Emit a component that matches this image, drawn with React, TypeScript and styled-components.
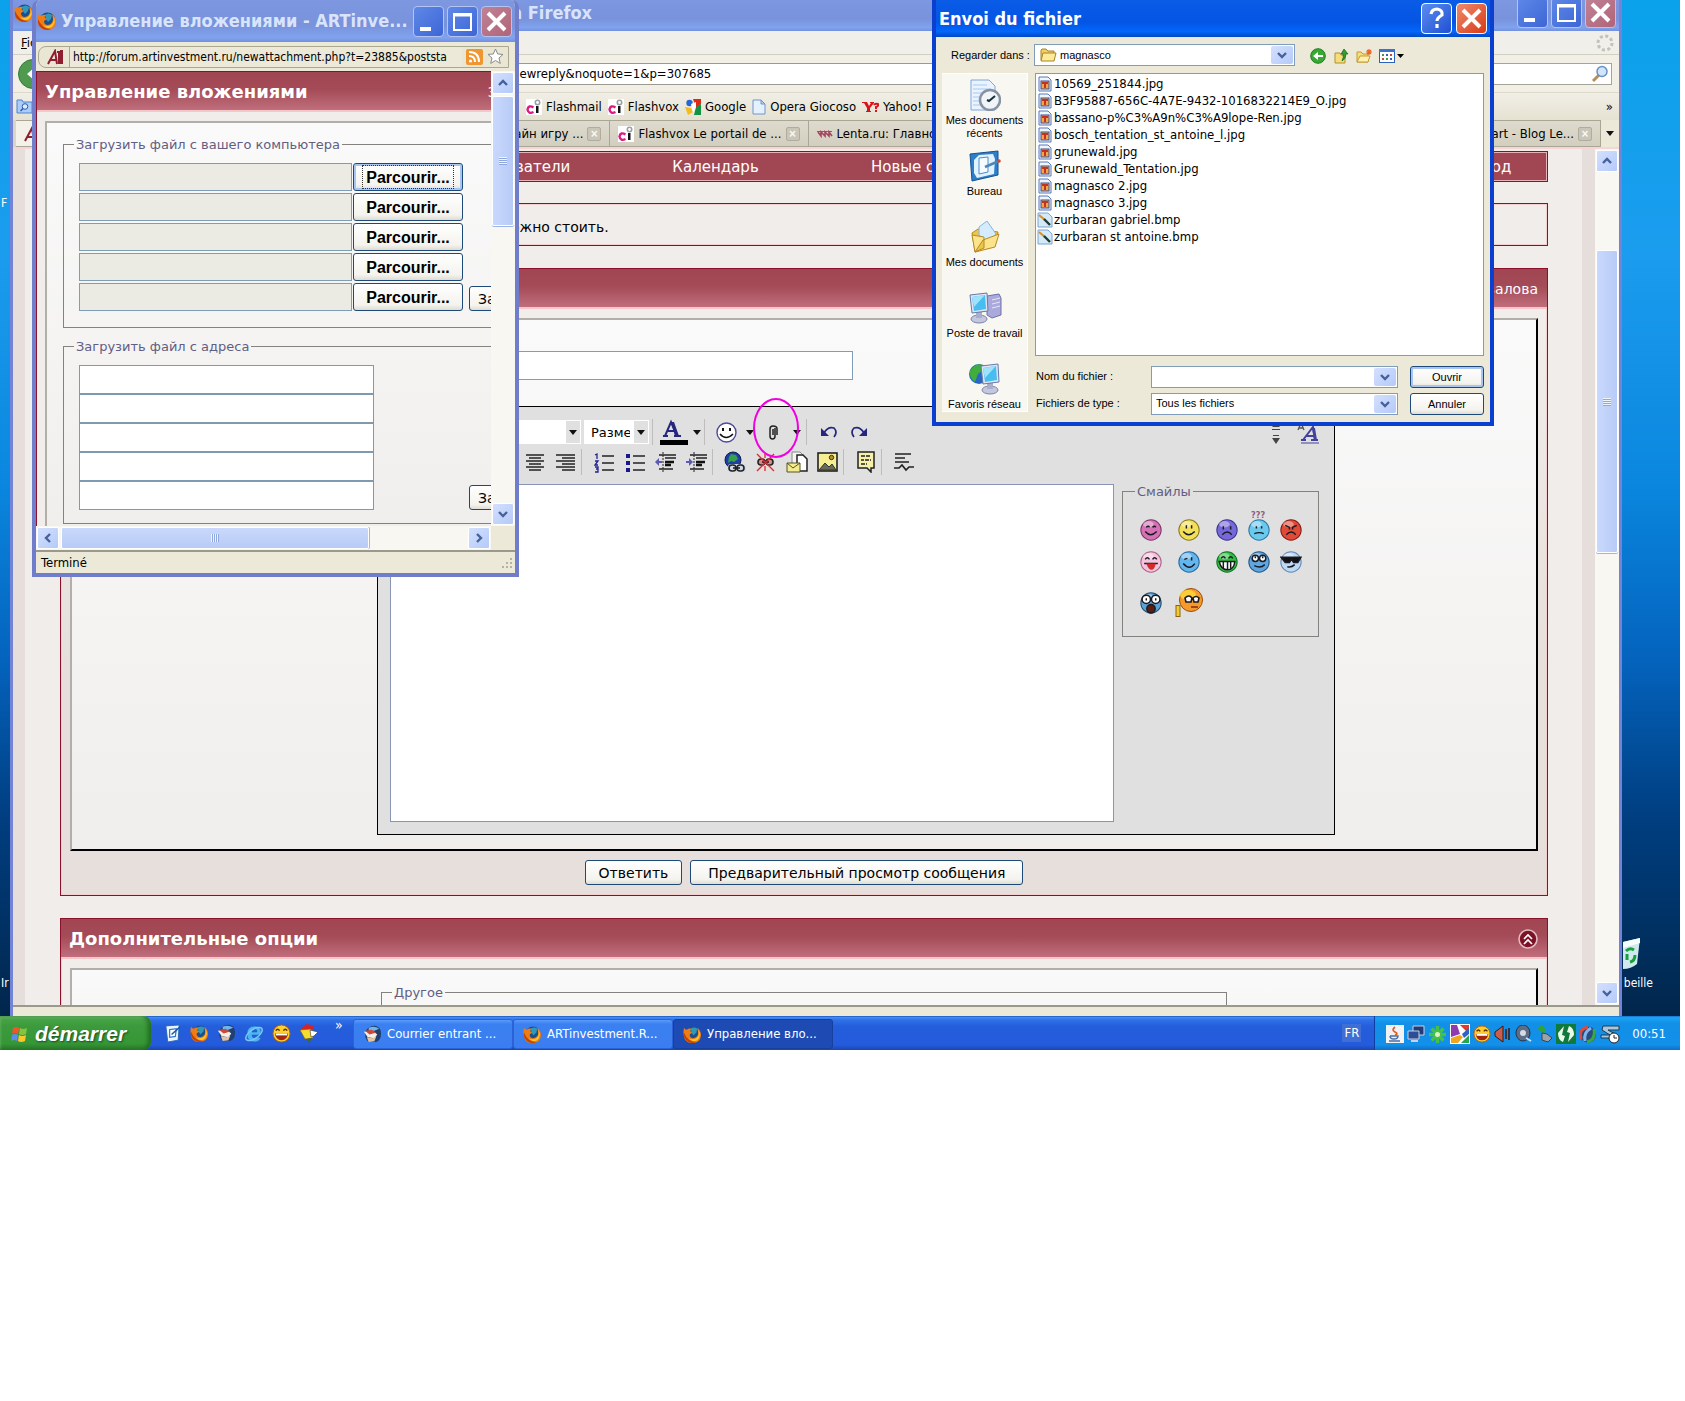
import React from 'react';
import styled, { createGlobalStyle, css } from 'styled-components';

const tahoma = '"DejaVu Sans Condensed", "DejaVu Sans", sans-serif';
const verdana = '"DejaVu Sans", sans-serif';
const arial = '"Liberation Sans", Arial, sans-serif';

const Global = createGlobalStyle`
  *, *::before, *::after { box-sizing: border-box; }
  body { margin: 0; background: #fff; font-family: ${tahoma}; font-size: 13px; color: #000; }
  button, input, select, textarea { font: inherit; color: inherit; margin: 0; }
  svg { display: block; flex: none; }
`;

/* ---------- icons ---------- */

type IconProps = { size?: number };

const Firefox = ({ size = 19 }: IconProps) => (
  <svg width={size} height={size} viewBox="0 0 20 20">
    <circle cx="10.500" cy="9.500" r="8" fill="#1c4f8f" />
    <path d="M8 4q4-3 7 0l-1 4-3 3-2-3z" fill="#2f9ab8" />
    <path d="M1 3q1 2 3 2 2-2 5-1-2 2-1 3l2 1-3 2q0 4 4 4 5-1 5-6l-1-5q4 3 4 8-1 8-9 8T1 12q-1-5 0-9z" fill="#ef7d13" />
    <path d="M16 5q2 6-2 9-4 2-8 0 4 5 9 2 5-5 1-11z" fill="#ffc62b" />
    <path d="M1 8q-1 7 5 10 4 2 8 0-9 0-13-10z" fill="#c2410c" />
  </svg>
);
const Thunderbird = ({ size = 19 }: IconProps) => (
  <svg width={size} height={size} viewBox="0 0 20 20">
    <path d="M3 6q4-6 11-5 5 2 5 8 0 7-5 9l-9-1q-4-4-2-11z" fill="#22406f" />
    <path d="M6 3q6-3 11 1l-5 2-6 1z" fill="#6fb6e8" />
    <path d="M1 7l9-1 5 4-3 4-7-1z" fill="#f4efe6" />
    <path d="M2 6l5 4 7-2-5-3z" fill="#c9483a" />
    <path d="M4 13l6 1 4-2-2 5-6 1z" fill="#e4c2a2" />
  </svg>
);
const Explorer = () => (
  <svg width="20" height="19" viewBox="0 0 20 19">
    <path d="M16 11H8q0 3 3 3 2 0 3-1l3 1q-2 4-6 4-8 0-8-8t8-8q7 0 6 9zM8 8h5q0-3-2-3-3 0-3 3z" fill="#4db4f5" stroke="#1766b8" strokeWidth=".6" />
    <ellipse cx="10" cy="10" rx="9.500" ry="4.500" transform="rotate(-35 10 10)" fill="none" stroke="#7cc7f7" strokeWidth="1.500" />
  </svg>
);
const Laugh = ({ size = 19 }: IconProps) => (
  <svg width={size} height={size} viewBox="0 0 20 20">
    <circle cx="10" cy="10" r="9" fill="#ffd02c" stroke="#b55a10" />
    <path d="M4 7q2-3 4 0M12 7q2-3 4 0" stroke="#5a2a05" strokeWidth="1.500" fill="none" />
    <path d="M3 10h14q-1 7-7 7t-7-7z" fill="#a3260f" />
    <path d="M4 10h12v2H4z" fill="#fff" />
  </svg>
);
const ShowDesktop = () => (
  <svg width="19" height="19" viewBox="0 0 20 20">
    <path d="M3 2l14-1-1 16-11 2z" fill="#e9f4ff" stroke="#2b66b5" />
    <path d="M7 6l7-1-1 8-6 1z" fill="#fff" stroke="#2f78c9" strokeWidth="1.300" />
    <path d="M9 11l9-8" stroke="#1c57a6" strokeWidth="1.600" />
  </svg>
);
const Parrot = () => (
  <svg width="20" height="19" viewBox="0 0 20 19">
    <path d="M2 4l6-4 7 2-2 5-9 1z" fill="#d4232a" />
    <path d="M1 6l11-1 2 9-8 1z" fill="#f6dd2d" stroke="#8b5d00" strokeWidth=".6" />
    <path d="M11 6l8 2-4 4-3 1z" fill="#fff" stroke="#333" strokeWidth=".6" />
    <path d="M8 15l5-1-3 5z" fill="#3f6e22" />
  </svg>
);
const WindowsFlag = () => (
  <svg width="18" height="18" viewBox="0 0 18 18">
    <path d="M2 3q3-2 6 0l-1 6q-3-2-6 0z" fill="#f0552b" />
    <path d="M9 3q3 2 7 0l-1 6q-4 2-7 0z" fill="#86c440" />
    <path d="M1 10q3-2 6 0l-1 6q-3-2-6 0z" fill="#5c8ee8" />
    <path d="M8 10q3 2 7 0l-1 6q-4 2-7 0z" fill="#fbc62e" />
  </svg>
);
const ArtLogo = () => (
  <svg width="18" height="16" viewBox="0 0 18 16">
    <path d="M1 15L8 2l2 13M3 11h6M10 3h2v12" fill="none" stroke="#8f1f30" strokeWidth="2" />
    <path d="M13 1h3v14h-3z" fill="#8f1f30" />
  </svg>
);
const Rss = () => (
  <svg width="17" height="16" viewBox="0 0 17 16">
    <rect width="17" height="16" rx="2" fill="#f0962e" />
    <circle cx="4.500" cy="12" r="1.600" fill="#fff" />
    <path d="M3 7q6 0 6 6M3 3q10 0 10 10" fill="none" stroke="#fff" strokeWidth="2" />
  </svg>
);
const Star = () => (
  <svg width="17" height="17" viewBox="0 0 17 17">
    <path d="M8.500 1l2.200 5 5.300.4-4 3.600 1.300 5.400-4.800-2.900-4.800 2.900L5 10 1 6.400 6.300 6z" fill="#fff" stroke="#8b8b8b" />
  </svg>
);
const Chevron = ({ dir = 'down' }: { dir?: 'up' | 'down' | 'left' | 'right' }) => {
  const turn = { down: 0, left: 90, up: 180, right: 270 }[dir];
  return (
    <svg width="10" height="10" viewBox="0 0 10 10">
      <path d="M1 3l4 4 4-4" transform={`rotate(${turn} 5 5)`} fill="none" stroke="#46629c" strokeWidth="2.400" />
    </svg>
  );
};
const Triangle = () => (
  <svg width="8" height="5" viewBox="0 0 8 5"><path d="M0 0h8L4 5z" fill="#111" /></svg>
);
const CiLogo = () => (
  <svg width="16" height="16" viewBox="0 0 16 16">
    <rect width="16" height="16" fill="#fff" />
    <path d="M7.500 8.500q-5-3-6 2 1 5 6 2.500" fill="none" stroke="#dc1c86" strokeWidth="2.400" />
    <path d="M10 7h2.500v7H10z" fill="#111" />
    <circle cx="11.500" cy="3.500" r="2.200" fill="none" stroke="#9aa0a8" strokeWidth="1.600" />
  </svg>
);
const GoogleLogo = () => (
  <svg width="16" height="16" viewBox="0 0 16 16">
    <path d="M8 0h8v5l-5 4z" fill="#de2a1a" /><path d="M16 5v11h-7l2-8z" fill="#129245" />
    <circle cx="4.500" cy="4" r="3.200" fill="#2765d8" /><path d="M0 8l6 1 2 4-5 3z" fill="#f2bd1d" />
    <path d="M6 5l5-2v5l-3 6-1-5z" fill="#fff" />
  </svg>
);
const PageIcon = () => (
  <svg width="14" height="16" viewBox="0 0 14 16">
    <path d="M1 1h8l4 4v10H1z" fill="#e6f1ff" stroke="#6f94cd" /><path d="M9 1v4h4z" fill="#b6d0f5" stroke="#6f94cd" />
  </svg>
);
const YahooLogo = () => (
  <svg width="17" height="12" viewBox="0 0 17 12">
    <path d="M0 1h5l2 4 2-3H8V1h4v1L8 7v3h1v1H4v-1h1V7L2 2H0z" fill="#d8131c" /><path d="M12 4q1-2 4-1 1 2-2 3v2M13 10h2" fill="none" stroke="#d8131c" strokeWidth="2" />
  </svg>
);
const LentaLogo = () => (
  <svg width="16" height="8" viewBox="0 0 16 8">
    <path d="M0 1h15v1H0z" fill="#4f6db1" /><path d="M1 2l3 4V2l4 4V2l4 4V2l3 4" fill="none" stroke="#a64560" strokeWidth="1.600" />
  </svg>
);
const Magnifier = () => (
  <svg width="18" height="18" viewBox="0 0 18 18">
    <path d="M2 16l6-6" stroke="#b58f5c" strokeWidth="3" /><circle cx="11" cy="6.500" r="5" fill="#cfe6fb" stroke="#6b90c0" strokeWidth="1.500" />
  </svg>
);
const Throbber = () => (
  <svg width="18" height="18" viewBox="0 0 18 18">
    <circle cx="9" cy="9" r="7" fill="none" stroke="#c4c2b6" strokeWidth="3" strokeDasharray="3 2.500" />
  </svg>
);
const BackArrow = () => (
  <svg width="30" height="30" viewBox="0 0 30 30">
    <circle cx="15" cy="15" r="14.500" fill="#4f9a4e" stroke="#357a38" /><path d="M9 15l8-7v4h6v6h-6v4z" fill="#fff" />
  </svg>
);
const SearchFolder = () => (
  <svg width="17" height="15" viewBox="0 0 17 15">
    <path d="M1 3V1h5l1 2h9v11H1z" fill="#a9cdf8" stroke="#4f83cf" /><circle cx="9" cy="7.500" r="2.800" fill="#dcecff" stroke="#2a5bb0" /><path d="M7 9.500L4.500 12" stroke="#2a5bb0" strokeWidth="1.500" />
  </svg>
);
const Folder = () => (
  <svg width="17" height="14" viewBox="0 0 17 14">
    <path d="M1 12V2l1-1h4l2 2h6v9z" fill="#f3cf64" stroke="#a88427" /><path d="M1 13l2-8h13l-2 8z" fill="#fdeb9c" stroke="#a88427" />
  </svg>
);
const GoBack = () => (
  <svg width="16" height="16" viewBox="0 0 16 16">
    <circle cx="8" cy="8" r="7.300" fill="#39a935" stroke="#1e7d22" /><path d="M3 8l5-4v3h5v2H8v3z" fill="#fff" />
  </svg>
);
const GoUp = () => (
  <svg width="16" height="16" viewBox="0 0 16 16">
    <path d="M2 5h5l1 2h4v8H2z" fill="#f6dd7c" stroke="#b3902e" /><path d="M9 13q2-4 1-7H8l3-5 4 5h-2q0 5-4 7z" fill="#2f9e2d" stroke="#17651a" strokeWidth=".7" />
  </svg>
);
const NewFolder = () => (
  <svg width="16" height="16" viewBox="0 0 16 16">
    <path d="M1 14V4h4l2 2h5v8z" fill="#f6dd7c" stroke="#c39a34" /><path d="M1 14l3-6h10l-2 6z" fill="#fdf0b0" stroke="#c39a34" /><path d="M13 1v6M10 4h6M11 2l4 4M15 2l-4 4" stroke="#ee6324" strokeWidth="1.200" />
  </svg>
);
const ViewMenu = () => (
  <svg width="26" height="16" viewBox="0 0 26 16">
    <rect x=".5" y="1.500" width="15" height="13" fill="#fff" stroke="#2e62b8" /><path d="M0 1h16v3H0z" fill="#3a74d0" />
    <path d="M3 6h2v2H3zM7 10h2v2H7z" fill="#3d9b4f" /><path d="M7 6h2v2H7zM11 10h2v2h-2z" fill="#3b5fa8" /><path d="M11 6h2v2h-2zM3 10h2v2H3z" fill="#c24d3f" />
    <path d="M18 6h7l-3.500 4z" fill="#000" />
  </svg>
);
const JpgIcon = () => (
  <svg width="14" height="16" viewBox="0 0 14 16">
    <path d="M1 1h9l3 3v11H1z" fill="#eef5ff" stroke="#5677b8" /><rect x="3" y="5" width="8" height="8" fill="#f3a64a" stroke="#3b4f8e" />
    <path d="M4 6h6v2H8v4H6V8H4z" fill="#c4331d" />
  </svg>
);
const BmpIcon = () => (
  <svg width="16" height="16" viewBox="0 0 16 16">
    <path d="M1 1h10l4 4v10H1z" fill="#d5eaf9" stroke="#7aa3cf" /><path d="M2 3l6 5" stroke="#d98f2a" strokeWidth="2.200" /><path d="M7 7l6 6" stroke="#1d3b35" strokeWidth="2.400" />
  </svg>
);
const Monitor = ({ x = 0, y = 0 }: { x?: number; y?: number }) => (
  <g transform={`translate(${x} ${y})`}>
    <ellipse cx="11" cy="26" rx="8" ry="4" fill="#c3c8de" stroke="#7d83a8" /><path d="M8 19h6v6H8z" fill="#a8aecb" />
    <path d="M2 2l17-2 1 18-16 2z" fill="#dfe4f3" stroke="#6879a6" /><path d="M4 4l13-2 1 14-12 2z" fill="#47bdf0" /><path d="M4 4l13-2L6 14z" fill="#9fe2fb" />
  </g>
);
const RecentDocs = () => (
  <svg width="32" height="32" viewBox="0 0 32 32">
    <path d="M2 1h18l6 6v24H2z" fill="#eaf3ff" stroke="#7ca6dc" /><path d="M4 6h14M4 10h18M4 14h12M4 18h8M4 22h8M4 26h10" stroke="#a7c9f1" />
    <circle cx="21" cy="21" r="10" fill="#f2f5f8" stroke="#8793a3" strokeWidth="2.500" /><path d="M26 17l-6 5-2-1" fill="none" stroke="#14303c" strokeWidth="2" />
  </svg>
);
const DesktopPlace = () => (
  <svg width="32" height="32" viewBox="0 0 32 32">
    <path d="M1 4l28-3v24L3 31z" fill="#2c7fc9" stroke="#17528f" /><path d="M5 10l5-5 14-1 2 5-1 15-17 4-3-5z" fill="#e2f2ff" />
    <path d="M10 8l9-1v15l-9 2z" fill="#f5fbff" stroke="#4a8ecb" /><path d="M16 17l14-6" stroke="#4f86bb" strokeWidth="2.500" /><circle cx="30" cy="11" r="1.800" fill="#d9482b" />
  </svg>
);
const DocumentsPlace = () => (
  <svg width="32" height="32" viewBox="0 0 32 32">
    <path d="M3 12l6-4 20 3-3 14-20 6z" fill="#eec54b" stroke="#b58b22" /><path d="M10 6l8-6 9 13-8 9-9-8z" fill="#d4ecfd" stroke="#84b4df" />
    <path d="M3 14l3 17 9-4V16zM30 13l-4 13-20 5 8-12z" fill="#fbe48b" stroke="#b58b22" />
  </svg>
);
const ComputerPlace = () => (
  <svg width="34" height="32" viewBox="0 0 34 32">
    <path d="M19 4l12-2 2 4v17l-9 3-5-3z" fill="#aaa9dc" stroke="#6f70ad" /><path d="M24 8l8-2M24 12l8-2M24 16l8-2" stroke="#e6e6fa" />
    <Monitor y={1} />
  </svg>
);
const NetworkPlace = () => (
  <svg width="34" height="32" viewBox="0 0 34 32">
    <circle cx="11" cy="11" r="10" fill="#2a66c4" /><path d="M2 8q4-7 11-7-1 4 2 6l-5 4-3 8q-6-4-5-11z" fill="#3fae3a" /><Monitor x={11} y={1} />
  </svg>
);
const Recycle = () => (
  <svg width="19" height="32" viewBox="0 0 19 32">
    <path d="M0 4l17-4-3 26q-6 5-14 5z" fill="#cfe9ee" /><path d="M0 4l17-4v5L0 10z" fill="#f5fdff" /><path d="M3 13q4-4 8-1M12 17q0 6-5 7M4 16v6" fill="none" stroke="#19a03a" strokeWidth="3" />
  </svg>
);

const Glyph = ({ d, w = 20, extra }: { d: string; w?: number; extra?: React.ReactNode }) => (
  <svg width={w} height="22" viewBox={`0 0 ${w} 22`}>
    <path d={d} fill="none" stroke="#222" strokeWidth="1.700" />{extra}
  </svg>
);
const CenterIcon = () => <Glyph d="M1 4h18M4 7h12M1 10h18M4 13h12M1 16h18M4 19h12" />;
const RightIcon = () => <Glyph d="M0 4h19M6 7h13M0 10h19M6 13h13M0 16h19M6 19h13" />;
const OrderedIcon = () => <Glyph d="M8 5h12M8 12h12M8 19h12" extra={<path d="M1 4l2-1v5M1 10h3l-3 4h3M1 16h3v2H2h2v3H1" fill="none" stroke="#22228c" strokeWidth="1.300" />} />;
const BulletIcon = () => <Glyph d="M8 5h12M8 12h12M8 19h12" extra={<path d="M1 3h4v4H1zM1 10h4v4H1zM1 17h4v4H1z" fill="#18188a" />} />;
const OutdentIcon = () => <Glyph w={22} d="M4 4h17M10 7h11M4 18h14" extra={<><path d="M10 11h9M10 14h6" stroke="#111" strokeWidth="2.400" /><path d="M8 1v20" stroke="#222" strokeDasharray="2 1" /><path d="M0 11l4-4v3h3v2H4v3z" fill="#5b5bb5" /></>} />;
const IndentIcon = () => <Glyph w={22} d="M4 4h17M10 7h11M4 18h14" extra={<><path d="M10 11h9M10 14h6" stroke="#111" strokeWidth="2.400" /><path d="M8 1v20" stroke="#222" strokeDasharray="2 1" /><path d="M7 11L3 7v3H0v2h3v3z" fill="#5b5bb5" /></>} />;
const ChainLinks = ({ y }: { y: number }) => (
  <g fill="none" stroke="#222" strokeWidth="1.600"><rect x="5" y={y} width="7" height="6" rx="3" /><rect x="13" y={y} width="7" height="6" rx="3" /><path d={`M9 ${y + 3}h7`} /></g>
);
const LinkIcon = () => (
  <svg width="22" height="22" viewBox="0 0 22 22"><circle cx="9" cy="9" r="8" fill="#1d3fa8" stroke="#111a50" /><path d="M7 3l5 1 2 4-4 3-3-1-3 2 1-6z" fill="#34a04a" /><rect x="4" y="13" width="18" height="8" rx="3" fill="#cfd8e8" /><ChainLinks y={14} /></svg>
);
const UnlinkIcon = () => (
  <svg width="21" height="22" viewBox="0 0 21 22"><g transform="translate(-2 0)"><path d="M6 9h13v4H6z" fill="#d98a8c" /><ChainLinks y={8} /></g><path d="M2 3l17 17M19 3L2 20" stroke="#e0282e" strokeWidth="1.300" /><path d="M10 3v4M10 15v5" stroke="#e0282e" strokeWidth="1.300" /></svg>
);
const MailIcon = () => (
  <svg width="22" height="22" viewBox="0 0 22 22"><path d="M6 1h8l3 3v12H6z" fill="#f5f5f5" stroke="#888" /><path d="M11 4h6l4 4v12H11z" fill="#fff" stroke="#222" strokeWidth="1.500" /><path d="M1 12h13v9H1z" fill="#f4eb8f" stroke="#555522" /><path d="M1 12l6 5 7-5" fill="none" stroke="#555522" /></svg>
);
const ImageIcon = () => (
  <svg width="21" height="20" viewBox="0 0 21 20"><rect x="1" y="1" width="19" height="18" fill="#f6ee93" stroke="#222" strokeWidth="1.600" /><circle cx="14.500" cy="5.500" r="2.200" fill="#c09018" stroke="#333" /><path d="M2 18l6-7 4 4 3-3 4 6z" fill="#6a6a5a" stroke="#333" /></svg>
);
const QuoteIcon = () => (
  <svg width="18" height="22" viewBox="0 0 18 22"><path d="M1 1h16v16h-3v4l-4-4H1z" fill="#f7f0a8" stroke="#222" strokeWidth="1.500" /><path d="M4 5h10M4 9h3M8 9h6M4 13h6" stroke="#222" strokeWidth="1.500" strokeDasharray="4 1" /></svg>
);
const CodeIcon = () => <Glyph d="M1 3h16M1 7h10M1 11h14M0 17h5l3-3 4 5 3-3h5" />;
const ColorIcon = () => (
  <svg width="28" height="26" viewBox="0 0 28 26"><path d="M3 17h5M14 17h7M5 17L11 3l6 14M8 12h7" fill="none" stroke="#26267f" strokeWidth="2" /><path d="M11 3l3 0 5 14h-4z" fill="#26267f" /><path d="M0 21h28v5H0z" fill="#000" /></svg>
);
const SmileIcon = () => (
  <svg width="21" height="21" viewBox="0 0 21 21"><circle cx="10.500" cy="10.500" r="9.500" fill="#fff" stroke="#4b4b9b" strokeWidth="1.400" /><path d="M6 6h2v3H6zM13 6h2v3h-2z" fill="#111" /><path d="M4 12q6 7 13 0" fill="none" stroke="#111" strokeWidth="1.500" /></svg>
);
const ClipIcon = () => (
  <svg width="10" height="15" viewBox="0 0 10 15"><path d="M7 3v8q0 3-2.500 3T2 11V4q0-3 3-3 4 0 4 3v6M5 4v6" fill="none" stroke="#222" strokeWidth="1.500" /></svg>
);
const UndoIcon = ({ flip }: { flip?: boolean }) => (
  <svg width="18" height="14" viewBox="0 0 18 14"><g transform={flip ? 'translate(18 0) scale(-1 1)' : undefined}><path d="M4 8q4-7 10-5 4 4 0 9" fill="none" stroke="#26267f" strokeWidth="1.700" /><path d="M1 3v8h8z" fill="#26267f" /></g></svg>
);
const ResizeIcon = () => (
  <svg width="8" height="26" viewBox="0 0 8 26"><path d="M4 4L0 8h8zM0 10h8v1H0zM1 16h6v1H1zM0 19h8l-4 6z" fill="#444" /></svg>
);
const ModeIcon = () => (
  <svg width="22" height="26" viewBox="0 0 22 26"><path d="M1 11l3-7 3 7M2 9h4" fill="none" stroke="#555" strokeWidth="1.300" /><path d="M6 21L16 8l2 13M9 17h8M4 21h5M14 21h7" fill="none" stroke="#43439c" strokeWidth="2" /><path d="M15 9h3l2 12h-3z" fill="#43439c" /><path d="M4 24h18" stroke="#43439c" /></svg>
);
const CollapseIcon = () => (
  <svg width="20" height="20" viewBox="0 0 20 20"><circle cx="10" cy="10" r="9" fill="#7c1226" stroke="#e0bcc2" strokeWidth="1.600" /><path d="M6 10l4-4 4 4M6 15l4-4 4 4" fill="none" stroke="#fff" strokeWidth="1.700" /></svg>
);

type Mood = 'shy' | 'smile' | 'sad' | 'puzzled' | 'angry' | 'tongue' | 'wink' | 'grin' | 'roll' | 'cool' | 'shock' | 'lazy';
const moods: Record<Mood, { fill: string; line: string; face: React.ReactNode }> = {
  shy: { fill: '#d472b5', line: '#813768', face: <path d="M6 8q2-2 3 0M12 8q2-2 3 0M5 12q5 6 11 0" /> },
  smile: { fill: '#f3e05a', line: '#8d7a1c', face: <path d="M8 6v3M13 6v3M5 12q5 6 11 0" /> },
  sad: { fill: '#7668d8', line: '#3d3391', face: <path d="M7 7v3M14 7v3M6 15q5-5 9 0" /> },
  puzzled: { fill: '#6cc9ee', line: '#2d7aa5', face: <path d="M8 7v2M13 7v2M6 14q5-2 9 0" /> },
  angry: { fill: '#e04a38', line: '#8b1b12', face: <path d="M5 6l4 2v2M16 6l-4 2v2M6 15q5-5 9 0" /> },
  tongue: { fill: '#f6c3dc', line: '#a9648a', face: <><path d="M5 8q2-3 4 0M12 8q2-3 4 0M4 12h13" /><path d="M6 12h9q-1 6-4 6t-5-6z" fill="#d22b2b" stroke="none" /></> },
  wink: { fill: '#63b5ec', line: '#27699f', face: <path d="M6 8l3-1M13 6v3M5 12q6 7 11 0" /> },
  grin: { fill: '#2fc143', line: '#117323', face: <><path d="M5 7q2-3 4 0M12 7q2-3 4 0" /><path d="M3 10h15q-1 8-7 8t-8-8z" fill="#fff" /><path d="M7 10v7M11 10v8M14 10v7" /></> },
  roll: { fill: '#5fa5df', line: '#235a8c', face: <><circle cx="7" cy="7" r="3" fill="#fff" /><circle cx="14" cy="7" r="3" fill="#fff" /><path d="M7 5v2M14 5v2M6 14q6 3 10-1" /></> },
  cool: { fill: '#bcd9f6', line: '#6689b5', face: <><path d="M1 6h19l-3 5h-4l-2-3-2 3H5z" fill="#111" /><path d="M7 15q4 1 7-2" /></> },
  shock: { fill: '#5ba3d6', line: '#214f76', face: <><circle cx="6" cy="7" r="4" fill="#fff" /><circle cx="15" cy="7" r="4" fill="#fff" /><path d="M6 6v2M15 6v2" /><ellipse cx="10.500" cy="16" rx="4" ry="4" fill="#5a1f12" /></> },
  lazy: { fill: '#f5a02c', line: '#97500f', face: null },
};
const LazyFace = () => (
  <svg width="28" height="30" viewBox="0 0 28 30">
    <circle cx="16" cy="12" r="11.500" fill="#f59a2c" stroke="#97500f" />
    <ellipse cx="13" cy="7" rx="8" ry="5" fill="#ffd93b" opacity=".8" />
    <path d="M10 10q4-4 7 0l-1 4h-5zM18 10q3-3 6 0l-1 4h-4z" fill="#fff" stroke="#1a1a22" strokeWidth="1.600" />
    <path d="M16 19h7" stroke="#8f2f12" strokeWidth="1.600" />
    <path d="M3 17v12" stroke="#8a6410" strokeWidth="5" /><path d="M3 18v10" stroke="#f2cb33" strokeWidth="3" />
  </svg>
);
const Face = ({ mood }: { mood: Mood }) => {
  if (mood === 'lazy') return <LazyFace />;
  const m = moods[mood];
  return (
    <svg width="22" height="22" viewBox="0 0 21 21">
      <circle cx="10.500" cy="10.500" r="9.700" fill={m.fill} stroke={m.line} />
      <ellipse cx="8" cy="5" rx="5" ry="3" fill="#fff" opacity=".4" />
      <g fill="none" stroke="#1a1a22" strokeWidth="1.400">{m.face}</g>
    </svg>
  );
};

/* ---------- desktop ---------- */

const Screen = styled.div`
  margin-right: 5px;
  display: flex;
  flex-direction: column;
`;
const Desktop = styled.main`
  position: relative;
  height: 1016px;
  overflow: hidden;
  background: linear-gradient(180deg, #0aa2ea 0%, #1b9cee 25%, #0a86de 48%, #0463bd 65%, #003f82 80%, #01264b 100%);
`;
const DesktopLabel = styled.span<{ $y: number }>`
  position: absolute;
  left: 1px;
  top: ${p => p.$y}px;
  font-size: 12px;
  line-height: 16px;
  color: #fff;
`;
const BinIcon = styled.div`
  position: absolute;
  right: 38px;
  top: 938px;
`;
const BinLabel = styled.span`
  position: absolute;
  right: 27px;
  top: 975px;
  font-size: 12px;
  line-height: 16px;
  color: #fff;
`;

/* ---------- window chrome ---------- */

const windowFrame = css`
  position: absolute;
  display: flex;
  flex-direction: column;
  overflow: hidden;
`;
const MainWindow = styled.section`
  ${windowFrame}
  left: 10px;
  right: 58px;
  top: 0;
  bottom: 0;
  border: solid #7384d6;
  border-width: 0 3px;
  background: #ece9d8;
`;
const PopupWindow = styled.section`
  ${windowFrame}
  left: 32px;
  top: 0;
  width: 487px;
  height: 577px;
  border: 4px solid #6f7dcb;
  border-top-width: 0;
  border-radius: 8px 8px 0 0;
  background: #ece9d8;
`;
const DialogWindow = styled.section`
  ${windowFrame}
  left: 932px;
  top: 0;
  width: 562px;
  height: 426px;
  border: 4px solid #0a3fcf;
  border-top-width: 0;
  background: #ece9d8;
`;
const TitleBar = styled.header<{ $h: number; $active?: boolean; $lift?: boolean }>`
  flex: none;
  display: flex;
  align-items: center;
  gap: 4px;
  height: ${p => p.$h}px;
  margin: 0 -4px;
  padding: 0 7px ${p => (p.$lift ? '6px' : '0')} ${p => (p.$active ? '7px' : '5px')};
  background: ${p => (p.$active
    ? 'linear-gradient(180deg, #0a5be6 0%, #0455e4 60%, #0267fb 85%, #0148c4 100%)'
    : 'linear-gradient(180deg, #7d97e0 0%, #7992dc 60%, #80a3ee 90%, #7190de 100%)')};
`;
const TitleText = styled.h1<{ $active?: boolean }>`
  flex: 1;
  margin: 0;
  overflow: hidden;
  white-space: nowrap;
  font: bold 18px/26px ${tahoma};
  color: ${p => (p.$active ? '#fff' : '#d8e4fb')};
`;
const TitleOffset = styled.span`
  display: block;
  width: 554px;
  text-align: right;
`;
const CaptionButton = styled.button<{ $tone: 'blue' | 'red' | 'fadedBlue' | 'fadedRed' }>`
  display: grid;
  place-items: center;
  width: 31px;
  height: 31px;
  padding: 0;
  border: 1px solid ${p => (p.$tone.startsWith('faded') ? '#b4c4f1' : '#fff')};
  border-radius: 4px;
  background: ${p => ({
    blue: 'linear-gradient(135deg, #5c8df0, #1f50d2)',
    red: 'linear-gradient(135deg, #f08a6c, #d83a15)',
    fadedBlue: 'linear-gradient(135deg, #5f88e8, #3d66d6)',
    fadedRed: 'linear-gradient(135deg, #c08296, #b06478)',
  }[p.$tone])};
`;
const CaptionGlyph = ({ kind }: { kind: 'min' | 'max' | 'close' | 'help' }) => (
  <svg width="23" height="23" viewBox="0 0 23 23" fill="none" stroke="#fff">
    {kind === 'min' && <path d="M3 19h11" strokeWidth="4" />}
    {kind === 'max' && <><path d="M3 4h17v16H3z" strokeWidth="2" /><path d="M2 5h19" strokeWidth="3" /></>}
    {kind === 'close' && <path d="M3 3l17 17M20 3L3 20" strokeWidth="4" />}
    {kind === 'help' && <path d="M6 7q1-5 6-5 6 1 5 6-5 3-5 6M12 17v4" strokeWidth="3.200" />}
  </svg>
);
const CaptionGroup = styled.div<{ $gap: number; $raise?: boolean }>`
  display: flex;
  gap: ${p => p.$gap}px;
  align-self: ${p => (p.$raise ? 'flex-start' : 'center')};
  margin-top: ${p => (p.$raise ? '-3px' : '0')};
`;

const MenuBar = styled.nav`
  flex: none;
  display: flex;
  align-items: center;
  justify-content: space-between;
  height: 24px;
  padding: 0 5px 0 8px;
  border-bottom: 1px solid #d2d0c2;
  background: #f0efe9;
`;
const MenuButton = styled.button`
  padding: 0;
  border: 0;
  background: none;
  font-size: 13px;
  line-height: 20px;
  &::first-letter { text-decoration: underline; }
`;
const NavBar = styled.div`
  flex: none;
  display: flex;
  align-items: center;
  gap: 8px;
  height: 38px;
  padding: 0 7px 0 5px;
  border-bottom: 1px solid #dcd9ca;
  background: #f1efe6;
`;
const PlainButton = styled.button`
  display: grid;
  place-items: center;
  padding: 0;
  border: 0;
  background: none;
`;
const AddressInput = styled.input`
  flex: 1;
  min-width: 0;
  height: 22px;
  padding: 0 0 0 170px;
  border: 1px solid #9a9a90;
  background: #fff;
  font-size: 13px;
`;
const SearchBox = styled.label`
  display: flex;
  align-items: center;
  width: 400px;
  height: 22px;
  padding: 0 2px;
  border: 1px solid #a4a498;
  background: #fff;
`;
const SearchInput = styled.input`
  flex: 1;
  min-width: 0;
  border: 0;
  background: none;
`;
const Bookmarks = styled.nav`
  flex: none;
  display: flex;
  align-items: center;
  height: 27px;
  padding: 0 6px 0 3px;
  background: linear-gradient(180deg, #f1efe6, #e5e2d2);
`;
const BookmarkList = styled.div`
  flex: 1;
  display: flex;
  align-items: center;
  gap: 6px;
  margin-left: 493px;
`;
const Bookmark = styled.a`
  display: flex;
  align-items: center;
  gap: 4px;
  font-size: 13px;
  line-height: 18px;
  white-space: nowrap;
  color: #000;
  text-decoration: none;
`;
const Tabs = styled.div`
  flex: none;
  display: flex;
  height: 29px;
  padding-left: 3px;
  border-bottom: 2px solid #f6d6d4;
  background: #d9d6c8;
`;
const Tab = styled.div<{ $end?: boolean; $on?: boolean }>`
  flex: 1;
  min-width: 0;
  display: flex;
  align-items: center;
  justify-content: ${p => (p.$end ? 'flex-end' : 'flex-start')};
  gap: 4px;
  padding: 0 8px;
  border: solid #a9a695;
  border-width: 1px 1px 1px 0;
  background: ${p => (p.$on ? '#f3f1e8' : 'linear-gradient(180deg, #dedbce, #d2cfc0)')};
`;
const TabTitle = styled.span<{ $grow?: boolean }>`
  flex: ${p => (p.$grow ? '1' : 'none')};
  white-space: nowrap;
  font-size: 13px;
  line-height: 20px;
`;
const TabClose = styled.button`
  flex: none;
  width: 14px;
  height: 14px;
  padding: 0;
  border: 1px solid #b0ad9e;
  border-radius: 2px;
  background: #c9c6b8;
  color: #f8f7f2;
  font: bold 12px/10px ${arial};
`;
const TabMenu = styled.button`
  display: grid;
  place-items: center;
  width: 18px;
  padding: 0;
  border: 0;
  background: #ece9d8;
`;

/* ---------- scrollbars ---------- */

const ScrollTrack = styled.div<{ $row?: boolean }>`
  flex: none;
  display: flex;
  flex-direction: ${p => (p.$row ? 'row' : 'column')};
  gap: 2px;
  ${p => (p.$row ? 'height: 24px;' : 'width: 24px;')}
  padding: 1px;
  background: #f8f7f1;
`;
const ScrollButton = styled.button`
  flex: none;
  display: grid;
  place-items: center;
  width: 22px;
  height: 22px;
  padding: 0;
  border: 1px solid #fff;
  border-radius: 2px;
  background: linear-gradient(135deg, #d3e0fe, #b5caf9);
`;
const ScrollSpace = styled.div<{ $grow: number }>`
  flex: ${p => p.$grow} 1 0;
`;
const ScrollThumb = styled.div<{ $grow: number; $row?: boolean }>`
  flex: ${p => p.$grow} 1 0;
  display: grid;
  place-items: center;
  border: 1px solid #fff;
  border-radius: 2px;
  box-shadow: ${p => (p.$row ? '1px 0 0 #9cb4e8' : '0 1px 0 #9cb4e8')};
  background: linear-gradient(${p => (p.$row ? '180deg' : '90deg')}, #c9d8fc, #b8cbf6);
  &::after {
    content: '';
    width: 8px;
    height: 8px;
    background: repeating-linear-gradient(${p => (p.$row ? '90deg' : '180deg')}, #eef4fe 0 1px, #8fa8e0 1px 2px);
  }
`;

/* ---------- forum page ---------- */

const Viewport = styled.div`
  flex: 1;
  min-height: 0;
  display: flex;
`;
const Page = styled.div`
  flex: 1;
  min-width: 0;
  overflow: hidden;
  padding: 2px 34px 0 35px;
  border: solid #e6dedb;
  border-width: 0 13px 0 12px;
  background: #f0edea;
  font-family: ${verdana};
`;
const SiteNav = styled.nav`
  display: grid;
  grid-template-columns: 350fr 208fr 194fr 260fr 353fr 122fr;
  align-items: center;
  height: 31px;
  margin-bottom: 21px;
  border: 1px solid #8c1029;
  box-shadow: inset 0 0 0 1px #e9b2b6;
  background: #a14753;
`;
const SiteLink = styled.a`
  text-align: center;
  font-size: 15px;
  line-height: 20px;
  color: #fff;
  text-decoration: none;
`;
const redFrame = css`
  border: 1px solid #8c1029;
  box-shadow: inset 0 0 0 1px #f4cfcd;
`;
const Notice = styled.p`
  ${redFrame}
  height: 43px;
  margin: 0 0 22px;
  padding: 11px 0 0 376px;
  font-size: 14px;
  line-height: 24px;
`;
const Panel = styled.section<{ $tint?: boolean }>`
  ${redFrame}
  margin-bottom: 22px;
  background: ${p => (p.$tint ? 'linear-gradient(180deg, #f0edea 60px, #e6dfdb 400px)' : '#f0edea')};
`;
const PanelHead = styled.header`
  display: flex;
  align-items: center;
  justify-content: space-between;
  height: 40px;
  padding: 2px 9px 0 8px;
  border-bottom: 2px solid #f7c6c8;
  background: linear-gradient(180deg, #a04652 0%, #a44b57 45%, #c06e7c 100%);
  color: #fff;
`;
const PanelTitle = styled.h2`
  margin: 0;
  font: bold 18px/24px ${verdana};
  white-space: nowrap;
`;
const HeadNote = styled.span`
  margin-left: auto;
  font-size: 14px;
  line-height: 24px;
`;
const Inset = styled.div<{ $top: number }>`
  margin: 9px 9px 0;
  padding: ${p => p.$top}px 0 14px;
  border: 2px solid;
  border-color: #b2aeaa #000 #000 #b2aeaa;
  background: linear-gradient(180deg, #fafafa, #f0eeec);
`;
const Column = styled.div`
  width: 854px;
  max-width: 100%;
  margin: 0 auto;
`;
const SubjectInput = styled.input`
  display: block;
  width: 476px;
  height: 29px;
  margin-bottom: 26px;
  border: 1px solid #7f9db9;
  background: #fff;
`;
const Editor = styled.div`
  width: 958px;
  padding: 10px 15px 12px 12px;
  border: 1px solid #000;
  background: #e0e0e0;
`;
const ToolRow = styled.div<{ $lead: number }>`
  display: flex;
  align-items: center;
  height: 30px;
  padding-left: ${p => p.$lead}px;
`;
const Tool = styled.button<{ $w?: number }>`
  display: grid;
  place-items: center;
  width: ${p => p.$w ?? 31}px;
  height: 28px;
  padding: 0;
  border: 0;
  background: none;
`;
const ToolSep = styled.span`
  width: 7px;
  height: 26px;
  border-left: 1px solid #bdbdbd;
`;
const ToolSelectBox = styled.span<{ $w: number }>`
  position: relative;
  width: ${p => p.$w}px;
  height: 24px;
  margin-right: 3px;
  border: 1px solid #fff;
`;
const ToolSelect = styled.select`
  width: 100%;
  height: 100%;
  padding: 0 18px 0 6px;
  border: 0;
  border-radius: 0;
  appearance: none;
  background: #fff;
  font-size: 13px;
`;
const ToolSelectArrow = styled.span`
  position: absolute;
  right: 0;
  top: 0;
  display: grid;
  place-items: center;
  width: 14px;
  height: 22px;
  background: #e0e0e0;
  pointer-events: none;
`;
const ToolEnd = styled.div`
  display: flex;
  gap: 17px;
  margin-left: auto;
`;
const EditorBody = styled.div`
  display: flex;
  align-items: flex-start;
  gap: 8px;
  margin-top: 7px;
`;
const MessageArea = styled.textarea`
  flex: 1;
  height: 338px;
  border: 1px solid #8a94b4;
  background: #fff;
  resize: none;
`;
const Group = styled.fieldset<{ $gap?: number; $end?: number }>`
  min-width: 0;
  margin: 0 0 ${p => p.$gap ?? 0}px;
  border: 1px solid #84827e;
  padding: 10px 0 ${p => p.$end ?? 0}px 10px;
`;
const GroupTitle = styled.legend`
  padding: 0 2px;
  font-size: 13px;
  line-height: 17px;
  color: #625d84;
`;
const Smileys = styled(Group)`
  width: 197px;
  height: 154px;
  margin: -1px 0 0;
  padding: 14px 0 0 12px;
`;
const SmileyGrid = styled.div`
  display: grid;
  grid-template-columns: 38px 38px 32px 32px 32px;
  grid-template-rows: 32px 32px 50px;
  align-items: center;
`;
const SmileyButton = styled.button`
  position: relative;
  width: 32px;
  height: 30px;
  display: grid;
  place-items: center;
  padding: 0;
  border: 0;
  background: none;
`;
const Puzzle = styled.span`
  position: absolute;
  left: 8px;
  top: -4px;
  font: bold 9px/9px ${tahoma};
  color: #8d5d84;
`;
const Actions = styled.div`
  display: flex;
  justify-content: center;
  gap: 8px;
  padding: 9px 0 10px;
`;
const XpButton = styled.button<{ $h: number; $px: number; $size: number; $font?: string; $hot?: boolean; $bold?: boolean }>`
  flex: none;
  height: ${p => p.$h}px;
  padding: 0 ${p => p.$px}px;
  border: 1px solid #1d4a78;
  border-radius: 3px;
  box-shadow: ${p => (p.$hot ? 'inset 0 0 0 2px #a9c5f2' : 'none')};
  background: linear-gradient(180deg, #fff 0%, #f4f3ee 80%, #dfdcd2 100%);
  font-family: ${p => p.$font ?? verdana};
  font-size: ${p => p.$size}px;
  font-weight: ${p => (p.$bold ? 'bold' : 'normal')};
  line-height: 18px;
  white-space: nowrap;
`;
const OtherGroup = styled(Group)`
  height: 120px;
  margin: 0 4px;
`;
const StatusBar = styled.footer<{ $h: number }>`
  flex: none;
  display: flex;
  align-items: center;
  justify-content: space-between;
  height: ${p => p.$h}px;
  padding: 0 2px 0 5px;
  border-top: 2px solid #9b998b;
  background: #ece9d8;
  font-size: 13px;
`;
const Grip = () => (
  <svg width="12" height="12" viewBox="0 0 12 12" fill="#b5b2a2"><path d="M9 1h2v2H9zM5 5h2v2H5zM9 5h2v2H9zM1 9h2v2H1zM5 9h2v2H5zM9 9h2v2H9z" /></svg>
);
const Highlight = styled.span`
  position: absolute;
  left: 753px;
  top: 398px;
  width: 46px;
  height: 60px;
  border: 2px solid #f000e0;
  border-radius: 50%;
  pointer-events: none;
`;

/* ---------- popup ---------- */

const PopupAddress = styled.div`
  flex: none;
  display: flex;
  align-items: center;
  height: 29px;
  padding: 0 6px 0 2px;
`;
const PopupAddressBox = styled.div`
  flex: 1;
  display: flex;
  align-items: center;
  gap: 4px;
  height: 22px;
  padding: 0 4px 0 8px;
  border: 1px solid #aaa78f;
  border-radius: 8px 0 0 8px;
  background: #e9e6d4;
`;
const PopupUrl = styled.input`
  flex: 1;
  min-width: 0;
  height: 20px;
  padding: 0 0 0 3px;
  border: 0;
  border-left: 1px solid #aaa78f;
  background: #ece9d8;
  font-size: 12px;
`;
const PopupMain = styled.div`
  flex: 1;
  min-height: 0;
  display: flex;
`;
const PopupPane = styled.div`
  flex: 1;
  min-width: 0;
  display: flex;
  flex-direction: column;
`;
const PopupClip = styled.div`
  flex: 1;
  min-height: 0;
  overflow: hidden;
  font-family: ${verdana};
`;
const PopupPage = styled.div`
  width: 560px;
  border-left: 1px solid #8c1029;
  border-top: 1px solid #8c1029;
  background: #f0edea;
`;
const PopupHead = styled(PanelHead)`
  padding-right: 46px;
`;
const PopupInset = styled.div`
  margin: 9px 0 0 8px;
  padding: 13px 0 20px 16px;
  border: solid #b2aeaa;
  border-width: 2px 0 0 2px;
  background: linear-gradient(180deg, #fafafa, #f0eeec);
`;
const PopupSide = styled.div`
  display: flex;
  padding-bottom: 24px;
  background: #ece9d8;
`;
const FieldGrid = styled.div`
  display: grid;
  justify-content: start;
  grid-template-columns: auto auto;
  align-items: end;
  gap: 6px;
  padding-left: 5px;
`;
const FileStack = styled.div`
  display: grid;
  gap: 2px;
`;
const UrlStack = styled.div`
  display: grid;
  width: 384px;
`;
const FileRow = styled.div`
  display: grid;
  grid-template-columns: 273px 110px;
  gap: 1px;
  height: 28px;
`;
const FileName = styled.input`
  min-width: 0;
  border: 1px solid #7f9db9;
  background: #ebebe4;
`;
const UrlInput = styled.input`
  width: 295px;
  height: 29px;
  border: 1px solid #8099ac;
  background: #fff;
`;
const FocusRing = styled.span<{ $on: boolean }>`
  display: block;
  height: 24px;
  padding: 0 3px;
  line-height: 24px;
  border: 1px dotted ${p => (p.$on ? '#333' : 'transparent')};
`;
const Browse = styled(XpButton)`
  display: grid;
  place-content: center;
`;

/* ---------- open-file dialog ---------- */

const DialogBody = styled.div`
  flex: 1;
  min-height: 0;
  display: grid;
  grid-template-columns: 86px 1fr;
  grid-template-rows: 29px 1fr;
  gap: 7px;
  padding: 0 6px 6px;
  font: 11px/13px ${arial};
`;
const LookIn = styled.div`
  grid-column: 1 / -1;
  display: flex;
  align-items: flex-end;
  padding-left: 9px;
`;
const LookLabel = styled.label`
  width: 83px;
  line-height: 22px;
  white-space: nowrap;
`;
const Combo = styled.div<{ $w: number }>`
  position: relative;
  display: flex;
  align-items: center;
  width: ${p => p.$w}px;
  height: 22px;
  border: 1px solid #7f9db9;
  background: #fff;
`;
const ComboIcon = styled.span`
  position: absolute;
  left: 5px;
  top: 3px;
  pointer-events: none;
`;
const ComboSelect = styled.select<{ $pad: number }>`
  width: 100%;
  height: 20px;
  padding: 0 24px 0 ${p => p.$pad}px;
  border: 0;
  appearance: none;
  background: none;
`;
const ComboInput = styled.input`
  width: 100%;
  height: 20px;
  padding: 0 24px 0 4px;
  border: 0;
  background: none;
`;
const ComboArrow = styled.span`
  position: absolute;
  right: 1px;
  top: 1px;
  display: grid;
  place-items: center;
  width: 22px;
  height: 18px;
  border-radius: 2px;
  background: linear-gradient(135deg, #d3e0fe, #b5caf9);
  pointer-events: none;
`;
const LookTools = styled.div`
  display: flex;
  gap: 7px;
  margin-left: 15px;
  height: 20px;
`;
const Places = styled.nav`
  display: flex;
  flex-direction: column;
  margin-bottom: 5px;
  padding: 5px 0 0;
  border: 1px solid #fff;
  border-width: 1px 1px 1px 0;
  background: #f9f7f1;
`;
const Place = styled.button`
  display: flex;
  flex-direction: column;
  align-items: center;
  gap: 3px;
  width: 100%;
  height: 71px;
  padding: 0;
  border: 0;
  background: none;
  font-size: 11px;
  line-height: 13px;
  &:last-child { height: 48px; }
`;
const Browser = styled.div`
  display: flex;
  flex-direction: column;
  min-width: 0;
`;
const FileList = styled.ul`
  flex: 1;
  margin: 0 0 7px;
  padding: 1px 0 0 1px;
  list-style: none;
  border: 1px solid #7f9db9;
  background: #fff;
`;
const FileItem = styled.li`
  display: flex;
  align-items: center;
  height: 17px;
  font: 13px/17px ${tahoma};
`;
const FileIcon = styled.span`
  display: flex;
  justify-content: center;
  width: 16px;
  margin-right: 1px;
`;
const FormRow = styled.div`
  display: grid;
  grid-template-columns: 115px 247px 1fr;
  align-items: center;
  height: 27px;
  padding-left: 1px;
`;
const DialogButton = styled(XpButton)`
  justify-self: end;
  width: 74px;
`;

/* ---------- taskbar ---------- */

const Taskbar = styled.footer`
  display: flex;
  height: 34px;
  background: linear-gradient(180deg, #1e4fb8 0%, #3f8cf3 4%, #2f70e8 12%, #245edb 30%, #245bdc 85%, #1a46b0 100%);
  color: #fff;
`;
const Start = styled.button`
  display: flex;
  align-items: center;
  gap: 6px;
  width: 151px;
  padding: 2px 0 0 11px;
  border: 0;
  border-radius: 0 8px 8px 0;
  box-shadow: inset -3px 0 4px #1f6a1f, inset 0 2px 3px #7cc77c;
  background: linear-gradient(180deg, #4ba64b 0%, #3c9a3c 30%, #369736 80%, #2a7c2a 100%);
  font: italic bold 21px/28px ${arial};
  color: #fff;
  text-shadow: 1px 1px 2px #1d4a1d;
`;
const QuickLaunch = styled.div`
  display: flex;
  align-items: center;
  gap: 8px;
  width: 202px;
  padding-left: 12px;
`;
const More = styled.span`
  align-self: flex-start;
  margin-left: 8px;
  font-size: 14px;
  line-height: 18px;
`;
const Task = styled.button<{ $on?: boolean }>`
  display: flex;
  align-items: center;
  gap: 5px;
  width: 160px;
  height: 30px;
  margin-top: 3px;
  padding: 0 8px 0 9px;
  border: 1px solid ${p => (p.$on ? '#173f9c' : '#2b62d6')};
  border-radius: 3px;
  background: ${p => (p.$on ? '#1e4bb3' : 'linear-gradient(180deg, #5a9af8 0%, #3b80f0 15%, #3a7df0 100%)')};
  font-size: 13px;
  line-height: 18px;
  color: #fff;
  white-space: nowrap;
`;
const Lang = styled.span`
  margin-left: auto;
  align-self: center;
  padding: 0 2px;
  background: #3f6fd4;
  font-size: 13px;
  line-height: 18px;
`;
const Tray = styled.div`
  display: flex;
  align-items: center;
  gap: 3px;
  margin-left: 13px;
  padding: 2px 14px 0 11px;
  border-left: 1px solid #0c3f9f;
  background: linear-gradient(180deg, #1a6fd0 0%, #1ba6f4 5%, #1290e8 20%, #1290ea 85%, #0f6fc5 100%);
  font-size: 13px;
`;
const Clock = styled.time`
  margin-left: 9px;
  line-height: 18px;
`;

const TrayIcons = () => (
  <>
    <svg width="18" height="18" viewBox="0 0 18 18"><rect width="18" height="18" fill="#f0f2f4" /><path d="M9 2q-4 3 0 5t0 3" fill="none" stroke="#e2571e" strokeWidth="1.600" /><path d="M4 11h8q0 3-4 3t-4-3M3 16h11" fill="none" stroke="#4a6ea3" strokeWidth="1.400" /></svg>
    <svg width="18" height="18" viewBox="0 0 18 18"><path d="M6 1h11v9H6z" fill="#233c78" stroke="#c8d0e4" /><path d="M1 6h11v8H1z" fill="#2d4d95" stroke="#c8d0e4" /><path d="M4 15h7v2H4z" fill="#c8d0e4" /></svg>
    <svg width="19" height="19" viewBox="0 0 19 19"><path d="M9.500 1v17M1 9.500h17M3.500 3.500l12 12M15.500 3.500l-12 12" stroke="#45c145" strokeWidth="3.400" /><circle cx="9.500" cy="9.500" r="2.500" fill="#d9f5c6" /></svg>
    <svg width="20" height="20" viewBox="0 0 20 20"><rect width="20" height="20" fill="#fff" /><path d="M1 1h6l3 9-9 3z" fill="#8e3ab0" /><path d="M10 1h9v9z" fill="#e23b2c" /><path d="M19 11v8h-8z" fill="#2ca64a" /><path d="M1 19v-5l9-3 3 2-5 6z" fill="#f0a71e" /><path d="M12 10l7-6v6l-5 4z" fill="#2c62cc" /></svg>
    <Laugh size={18} />
    <svg width="18" height="18" viewBox="0 0 18 18"><path d="M1 7l8-6v16l-8-6z" fill="#c4604c" stroke="#40150e" /><path d="M12 4v10M15 3v12" stroke="#3c1c18" strokeWidth="1.600" /></svg>
    <svg width="18" height="18" viewBox="0 0 18 18"><ellipse cx="8" cy="8" rx="7" ry="8" fill="#5d6d85" stroke="#27344a" /><circle cx="8" cy="8" r="3" fill="#d4dce8" /><path d="M11 13l5 3" stroke="#c7e2fb" strokeWidth="2" /></svg>
    <svg width="17" height="18" viewBox="0 0 17 18"><path d="M1 3l5-3 4 5-2 4z" fill="#2fa33a" /><path d="M6 8l5 1 5 4-4 4-6-2z" fill="#9aa3ad" stroke="#3c454f" /></svg>
    <svg width="20" height="20" viewBox="0 0 20 20"><rect width="20" height="20" fill="#0f7a3c" /><path d="M8 2L2 9q0 7 5 9l2-6-3-1zM12 18l6-7q0-7-5-9l-2 6 3 1z" fill="#eafbe9" /></svg>
    <svg width="18" height="19" viewBox="0 0 18 19"><circle cx="9" cy="9.500" r="8" fill="#2a4c7c" /><path d="M2 14Q-1 4 9 2" fill="none" stroke="#e04a3c" strokeWidth="3" /><path d="M6 16q-2-8 6-13" fill="none" stroke="#7fb4ee" strokeWidth="3" /><path d="M8 17q9-2 7-13" fill="none" stroke="#3aa846" strokeWidth="3" /></svg>
    <svg width="20" height="19" viewBox="0 0 20 19"><path d="M3 1h16v4H8l9 5v3H1v-3h9L2 5z" fill="#a7c7dc" stroke="#1e3a52" /><circle cx="14" cy="13" r="5" fill="#fff" stroke="#222" /><path d="M14 10v3h3" fill="none" stroke="#222" /></svg>
  </>
);

/* ---------- data ---------- */

const files = [
  '10569_251844.jpg',
  'B3F95887-656C-4A7E-9432-1016832214E9_O.jpg',
  'bassano-p%C3%A9n%C3%A9lope-Ren.jpg',
  'bosch_tentation_st_antoine_l.jpg',
  'grunewald.jpg',
  'Grunewald_Tentation.jpg',
  'magnasco 2.jpg',
  'magnasco 3.jpg',
  'zurbaran gabriel.bmp',
  'zurbaran st antoine.bmp',
];
const places = [
  { label: 'Mes documents récents', icon: <RecentDocs /> },
  { label: 'Bureau', icon: <DesktopPlace /> },
  { label: 'Mes documents', icon: <DocumentsPlace /> },
  { label: 'Poste de travail', icon: <ComputerPlace /> },
  { label: 'Favoris réseau', icon: <NetworkPlace /> },
];
const faceOrder: Mood[] = ['shy', 'smile', 'sad', 'puzzled', 'angry', 'tongue', 'wink', 'grin', 'roll', 'cool', 'shock', 'lazy'];
const siteLinks = ['Справка', 'Пользователи', 'Календарь', 'Новые сообщения', 'Поиск', 'Выход'];
const bookmarks = [
  { label: 'Flashmail', icon: <CiLogo /> },
  { label: 'Flashvox', icon: <CiLogo /> },
  { label: 'Google', icon: <GoogleLogo /> },
  { label: 'Opera Giocoso', icon: <PageIcon /> },
  { label: 'Yahoo! France', icon: <YahooLogo /> },
];
const slots = [1, 2, 3, 4, 5];

const VerticalScroll = ({ before, thumb, after }: { before: number; thumb: number; after: number }) => (
  <ScrollTrack>
    <ScrollButton aria-label="Haut"><Chevron dir="up" /></ScrollButton>
    {before > 0 && <ScrollSpace $grow={before} />}
    <ScrollThumb $grow={thumb} />
    <ScrollSpace $grow={after} />
    <ScrollButton aria-label="Bas"><Chevron /></ScrollButton>
  </ScrollTrack>
);

const WindowButtons = ({ raise }: { raise?: boolean }) => (
  <CaptionGroup $gap={3} $raise={raise}>
    <CaptionButton $tone="fadedBlue" aria-label="Réduire"><CaptionGlyph kind="min" /></CaptionButton>
    <CaptionButton $tone="fadedBlue" aria-label="Agrandir"><CaptionGlyph kind="max" /></CaptionButton>
    <CaptionButton $tone="fadedRed" aria-label="Fermer"><CaptionGlyph kind="close" /></CaptionButton>
  </CaptionGroup>
);

function ForumEditor() {
  return (
    <Editor>
      <ToolRow $lead={10}>
        <ToolSelectBox $w={181}>
          <ToolSelect aria-label="Шрифт"><option></option></ToolSelect>
          <ToolSelectArrow><Triangle /></ToolSelectArrow>
        </ToolSelectBox>
        <ToolSelectBox $w={65}>
          <ToolSelect aria-label="Размер"><option>Размер</option></ToolSelect>
          <ToolSelectArrow><Triangle /></ToolSelectArrow>
        </ToolSelectBox>
        <ToolSep />
        <Tool $w={30} aria-label="Цвет"><ColorIcon /></Tool>
        <Tool $w={15} aria-label="Палитра"><Triangle /></Tool>
        <ToolSep />
        <Tool aria-label="Смайлы"><SmileIcon /></Tool>
        <Tool $w={15} aria-label="Все смайлы"><Triangle /></Tool>
        <Tool aria-label="Вложения"><ClipIcon /></Tool>
        <Tool $w={18} aria-label="Список вложений"><Triangle /></Tool>
        <ToolSep />
        <Tool aria-label="Отменить"><UndoIcon /></Tool>
        <Tool $w={30} aria-label="Повторить"><UndoIcon flip /></Tool>
        <ToolEnd>
          <Tool $w={8} aria-label="Высота"><ResizeIcon /></Tool>
          <Tool $w={22} aria-label="Режим"><ModeIcon /></Tool>
        </ToolEnd>
      </ToolRow>
      <ToolRow $lead={129}>
        <Tool aria-label="По центру"><CenterIcon /></Tool>
        <Tool aria-label="По правому краю"><RightIcon /></Tool>
        <ToolSep />
        <Tool aria-label="Нумерация"><OrderedIcon /></Tool>
        <Tool aria-label="Маркеры"><BulletIcon /></Tool>
        <Tool aria-label="Уменьшить отступ"><OutdentIcon /></Tool>
        <Tool aria-label="Увеличить отступ"><IndentIcon /></Tool>
        <ToolSep />
        <Tool aria-label="Ссылка"><LinkIcon /></Tool>
        <Tool aria-label="Убрать ссылку"><UnlinkIcon /></Tool>
        <Tool aria-label="Почта"><MailIcon /></Tool>
        <Tool aria-label="Картинка"><ImageIcon /></Tool>
        <ToolSep />
        <Tool aria-label="Цитата"><QuoteIcon /></Tool>
        <ToolSep />
        <Tool aria-label="Код"><CodeIcon /></Tool>
      </ToolRow>
      <EditorBody>
        <MessageArea aria-label="Сообщение" />
        <Smileys>
          <GroupTitle>Смайлы</GroupTitle>
          <SmileyGrid>
            {faceOrder.map(m => (
              <SmileyButton key={m} aria-label={m}>
                {m === 'puzzled' && <Puzzle>???</Puzzle>}
                <Face mood={m} />
              </SmileyButton>
            ))}
          </SmileyGrid>
        </Smileys>
      </EditorBody>
    </Editor>
  );
}

function ForumWindow() {
  return (
    <MainWindow>
      <TitleBar $h={31} $lift>
        <Firefox size={20} />
        <TitleText><TitleOffset>Mozilla Firefox</TitleOffset></TitleText>
        <WindowButtons raise />
      </TitleBar>
      <MenuBar><MenuButton>Fichier</MenuButton><Throbber /></MenuBar>
      <NavBar>
        <PlainButton aria-label="Précédent"><BackArrow /></PlainButton>
        <AddressInput aria-label="Adresse" defaultValue="http://forum.artinvestment.ru/newreply.php?do=newreply&noquote=1&p=307685" />
        <SearchBox><SearchInput aria-label="Rechercher" /><Magnifier /></SearchBox>
      </NavBar>
      <Bookmarks>
        <SearchFolder />
        <BookmarkList>
          {bookmarks.map(b => <Bookmark key={b.label} href="#">{b.icon}{b.label}</Bookmark>)}
        </BookmarkList>
        <span>»</span>
      </Bookmarks>
      <Tabs>
        <Tab $on><ArtLogo /></Tab>
        <Tab />
        <Tab $end><TabTitle>Онлайн игру ...</TabTitle><TabClose aria-label="Fermer">×</TabClose></Tab>
        <Tab><CiLogo /><TabTitle $grow>Flashvox Le portail de ...</TabTitle><TabClose aria-label="Fermer">×</TabClose></Tab>
        <Tab><LentaLogo /><TabTitle $grow>Lenta.ru: Главное</TabTitle></Tab>
        <Tab />
        <Tab />
        <Tab $end><TabTitle>Smart - Blog Le...</TabTitle><TabClose aria-label="Fermer">×</TabClose></Tab>
        <TabMenu aria-label="Onglets"><Triangle /></TabMenu>
      </Tabs>
      <Viewport>
        <Page>
          <SiteNav>{siteLinks.map(l => <SiteLink key={l} href="#">{l}</SiteLink>)}</SiteNav>
          <Notice>сколько можно стоить.</Notice>
          <Panel $tint>
            <PanelHead><HeadNote>Шувалова</HeadNote></PanelHead>
            <Inset $top={31}>
              <Column>
                <SubjectInput aria-label="Заголовок" />
                <ForumEditor />
              </Column>
            </Inset>
            <Actions>
              <XpButton $h={25} $px={13} $size={14}>Ответить</XpButton>
              <XpButton $h={25} $px={17} $size={14}>Предварительный просмотр сообщения</XpButton>
            </Actions>
          </Panel>
          <Panel>
            <PanelHead>
              <PanelTitle>Дополнительные опции</PanelTitle>
              <PlainButton aria-label="Свернуть"><CollapseIcon /></PlainButton>
            </PanelHead>
            <Inset $top={14}>
              <Column><OtherGroup><GroupTitle>Другое</GroupTitle></OtherGroup></Column>
            </Inset>
          </Panel>
        </Page>
        <VerticalScroll before={75} thumb={303} after={428} />
      </Viewport>
      <StatusBar $h={11} />
    </MainWindow>
  );
}

function AttachmentPopup() {
  return (
    <PopupWindow>
      <TitleBar $h={42}>
        <Firefox size={20} />
        <TitleText>Управление вложениями - ARTinve...</TitleText>
        <WindowButtons />
      </TitleBar>
      <PopupAddress>
        <PopupAddressBox>
          <ArtLogo />
          <PopupUrl aria-label="Adresse" defaultValue="http://forum.artinvestment.ru/newattachment.php?t=23885&poststa" />
          <Rss /><Star />
        </PopupAddressBox>
      </PopupAddress>
      <PopupMain>
        <PopupPane>
          <PopupClip>
            <PopupPage>
              <PopupHead><PanelTitle>Управление вложениями</PanelTitle><HeadNote>Закрыть</HeadNote></PopupHead>
              <PopupInset>
                <Group $gap={10} $end={16}>
                  <GroupTitle>Загрузить файл с вашего компьютера</GroupTitle>
                  <FieldGrid>
                    <FileStack>
                      {slots.map(n => (
                        <FileRow key={n}>
                          <FileName aria-label={`Файл ${n}`} readOnly />
                          <Browse $h={28} $px={0} $size={16} $font={arial} $bold $hot={n === 1}>
                            <FocusRing $on={n === 1}>Parcourir...</FocusRing>
                          </Browse>
                        </FileRow>
                      ))}
                    </FileStack>
                    <XpButton $h={25} $px={8} $size={14}>Загрузить</XpButton>
                  </FieldGrid>
                </Group>
                <Group $end={13}>
                  <GroupTitle>Загрузить файл с адреса</GroupTitle>
                  <FieldGrid>
                    <UrlStack>
                      {slots.map(n => <UrlInput key={n} aria-label={`Адрес ${n}`} />)}
                    </UrlStack>
                    <XpButton $h={25} $px={8} $size={14}>Загрузить</XpButton>
                  </FieldGrid>
                </Group>
              </PopupInset>
            </PopupPage>
          </PopupClip>
          <ScrollTrack $row>
            <ScrollButton aria-label="Gauche"><Chevron dir="left" /></ScrollButton>
            <ScrollThumb $row $grow={310} />
            <ScrollSpace $grow={96} />
            <ScrollButton aria-label="Droite"><Chevron dir="right" /></ScrollButton>
          </ScrollTrack>
        </PopupPane>
        <PopupSide>
          <VerticalScroll before={0} thumb={130} after={278} />
        </PopupSide>
      </PopupMain>
      <StatusBar $h={23}><span>Terminé</span><Grip /></StatusBar>
    </PopupWindow>
  );
}

function FileDialog() {
  return (
    <DialogWindow>
      <TitleBar $h={37} $active>
        <TitleText $active>Envoi du fichier</TitleText>
        <CaptionGroup $gap={4}>
          <CaptionButton $tone="blue" aria-label="Aide"><CaptionGlyph kind="help" /></CaptionButton>
          <CaptionButton $tone="red" aria-label="Fermer"><CaptionGlyph kind="close" /></CaptionButton>
        </CaptionGroup>
      </TitleBar>
      <DialogBody>
        <LookIn>
          <LookLabel htmlFor="look">Regarder dans :</LookLabel>
          <Combo $w={261}>
            <ComboIcon><Folder /></ComboIcon>
            <ComboSelect id="look" $pad={25}><option>magnasco</option></ComboSelect>
            <ComboArrow><Chevron /></ComboArrow>
          </Combo>
          <LookTools>
            <PlainButton aria-label="Retour"><GoBack /></PlainButton>
            <PlainButton aria-label="Dossier parent"><GoUp /></PlainButton>
            <PlainButton aria-label="Nouveau dossier"><NewFolder /></PlainButton>
            <PlainButton aria-label="Affichage"><ViewMenu /></PlainButton>
          </LookTools>
        </LookIn>
        <Places>
          {places.map(p => <Place key={p.label}>{p.icon}<span>{p.label}</span></Place>)}
        </Places>
        <Browser>
          <FileList>
            {files.map(f => (
              <FileItem key={f}>
                <FileIcon>{f.endsWith('bmp') ? <BmpIcon /> : <JpgIcon />}</FileIcon>
                {f}
              </FileItem>
            ))}
          </FileList>
          <FormRow>
            <label htmlFor="fname">Nom du fichier :</label>
            <Combo $w={247}><ComboInput id="fname" /><ComboArrow><Chevron /></ComboArrow></Combo>
            <DialogButton $h={22} $px={4} $size={11} $font={arial} $hot>Ouvrir</DialogButton>
          </FormRow>
          <FormRow>
            <label htmlFor="ftype">Fichiers de type :</label>
            <Combo $w={247}>
              <ComboSelect id="ftype" $pad={4}><option>Tous les fichiers</option></ComboSelect>
              <ComboArrow><Chevron /></ComboArrow>
            </Combo>
            <DialogButton $h={22} $px={4} $size={11} $font={arial}>Annuler</DialogButton>
          </FormRow>
        </Browser>
      </DialogBody>
    </DialogWindow>
  );
}

export default function App() {
  return (
    <>
      <Global />
      <Screen>
        <Desktop>
          <DesktopLabel $y={195}>F</DesktopLabel>
          <DesktopLabel $y={975}>Ir</DesktopLabel>
          <BinIcon><Recycle /></BinIcon>
          <BinLabel>beille</BinLabel>
          <ForumWindow />
          <Highlight />
          <AttachmentPopup />
          <FileDialog />
        </Desktop>
        <Taskbar>
          <Start><WindowsFlag />démarrer</Start>
          <QuickLaunch>
            <ShowDesktop /><Firefox /><Thunderbird /><Explorer /><Laugh /><Parrot /><More>»</More>
          </QuickLaunch>
          <Task><Thunderbird />Courrier entrant ...</Task>
          <Task><Firefox />ARTinvestment.R...</Task>
          <Task $on><Firefox />Управление вло...</Task>
          <Lang>FR</Lang>
          <Tray><TrayIcons /><Clock>00:51</Clock></Tray>
        </Taskbar>
      </Screen>
    </>
  );
}
